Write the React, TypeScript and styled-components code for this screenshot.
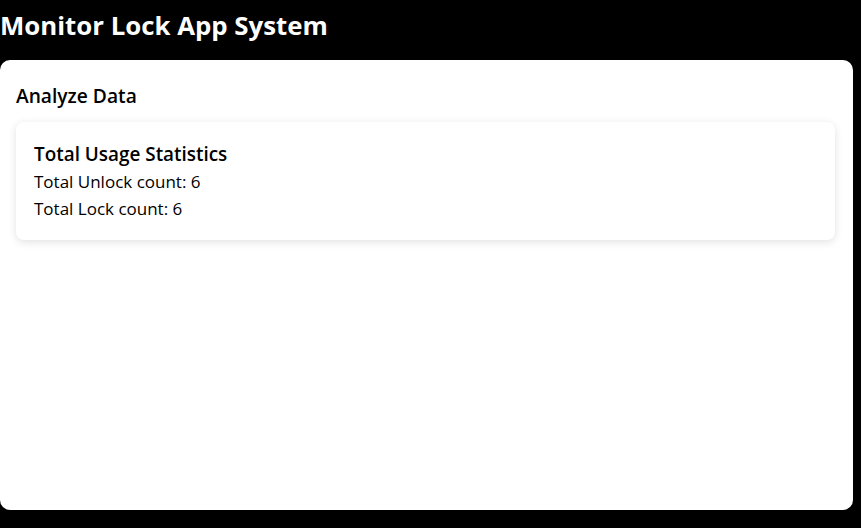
import React from "react";
import styled, { createGlobalStyle } from "styled-components";

const Global = createGlobalStyle`
  html, body { margin: 0; padding: 0; background: #000; }
  body { font-family: "Open Sans", "Noto Sans", sans-serif; color: #000; }
  * { box-sizing: border-box; }
`;

const Page = styled.div`
  display: flex;
  flex-direction: column;
  min-height: 528px;
  background: #000;
  padding: 0 8px 18px 0;
`;

const Title = styled.h1`
  margin: 0;
  height: 60px;
  padding-top: 9px;
  font-size: 25.8px;
  font-weight: 700;
  color: #fff;
  line-height: 32px;
`;

const Panel = styled.main`
  flex: 1;
  background: #fff;
  border-radius: 10px;
  padding: 24px 18px 16px 16px;
  display: flex;
  flex-direction: column;
  gap: 14px;
`;

const PanelHeading = styled.h2`
  margin: 0;
  font-size: 19.2px;
  font-weight: 600;
  line-height: 24px;
`;

const Card = styled.section`
  background: #fff;
  border-radius: 8px;
  box-shadow: 0 2px 8px rgba(0, 0, 0, 0.12);
  padding: 20px 18px 18px;
`;

const CardTitle = styled.h3`
  margin: 0 0 2px;
  font-size: 18.9px;
  font-weight: 600;
  line-height: 24px;
`;

const Stat = styled.p`
  margin: 0;
  font-size: 17px;
  line-height: 27px;
`;

export default function App() {
  return (
    <>
      <Global />
      <Page>
        <Title>Monitor Lock App System</Title>
        <Panel>
          <PanelHeading>Analyze Data</PanelHeading>
          <Card>
            <CardTitle>Total Usage Statistics</CardTitle>
            <Stat>Total Unlock count: 6</Stat>
            <Stat>Total Lock count: 6</Stat>
          </Card>
        </Panel>
      </Page>
    </>
  );
}
